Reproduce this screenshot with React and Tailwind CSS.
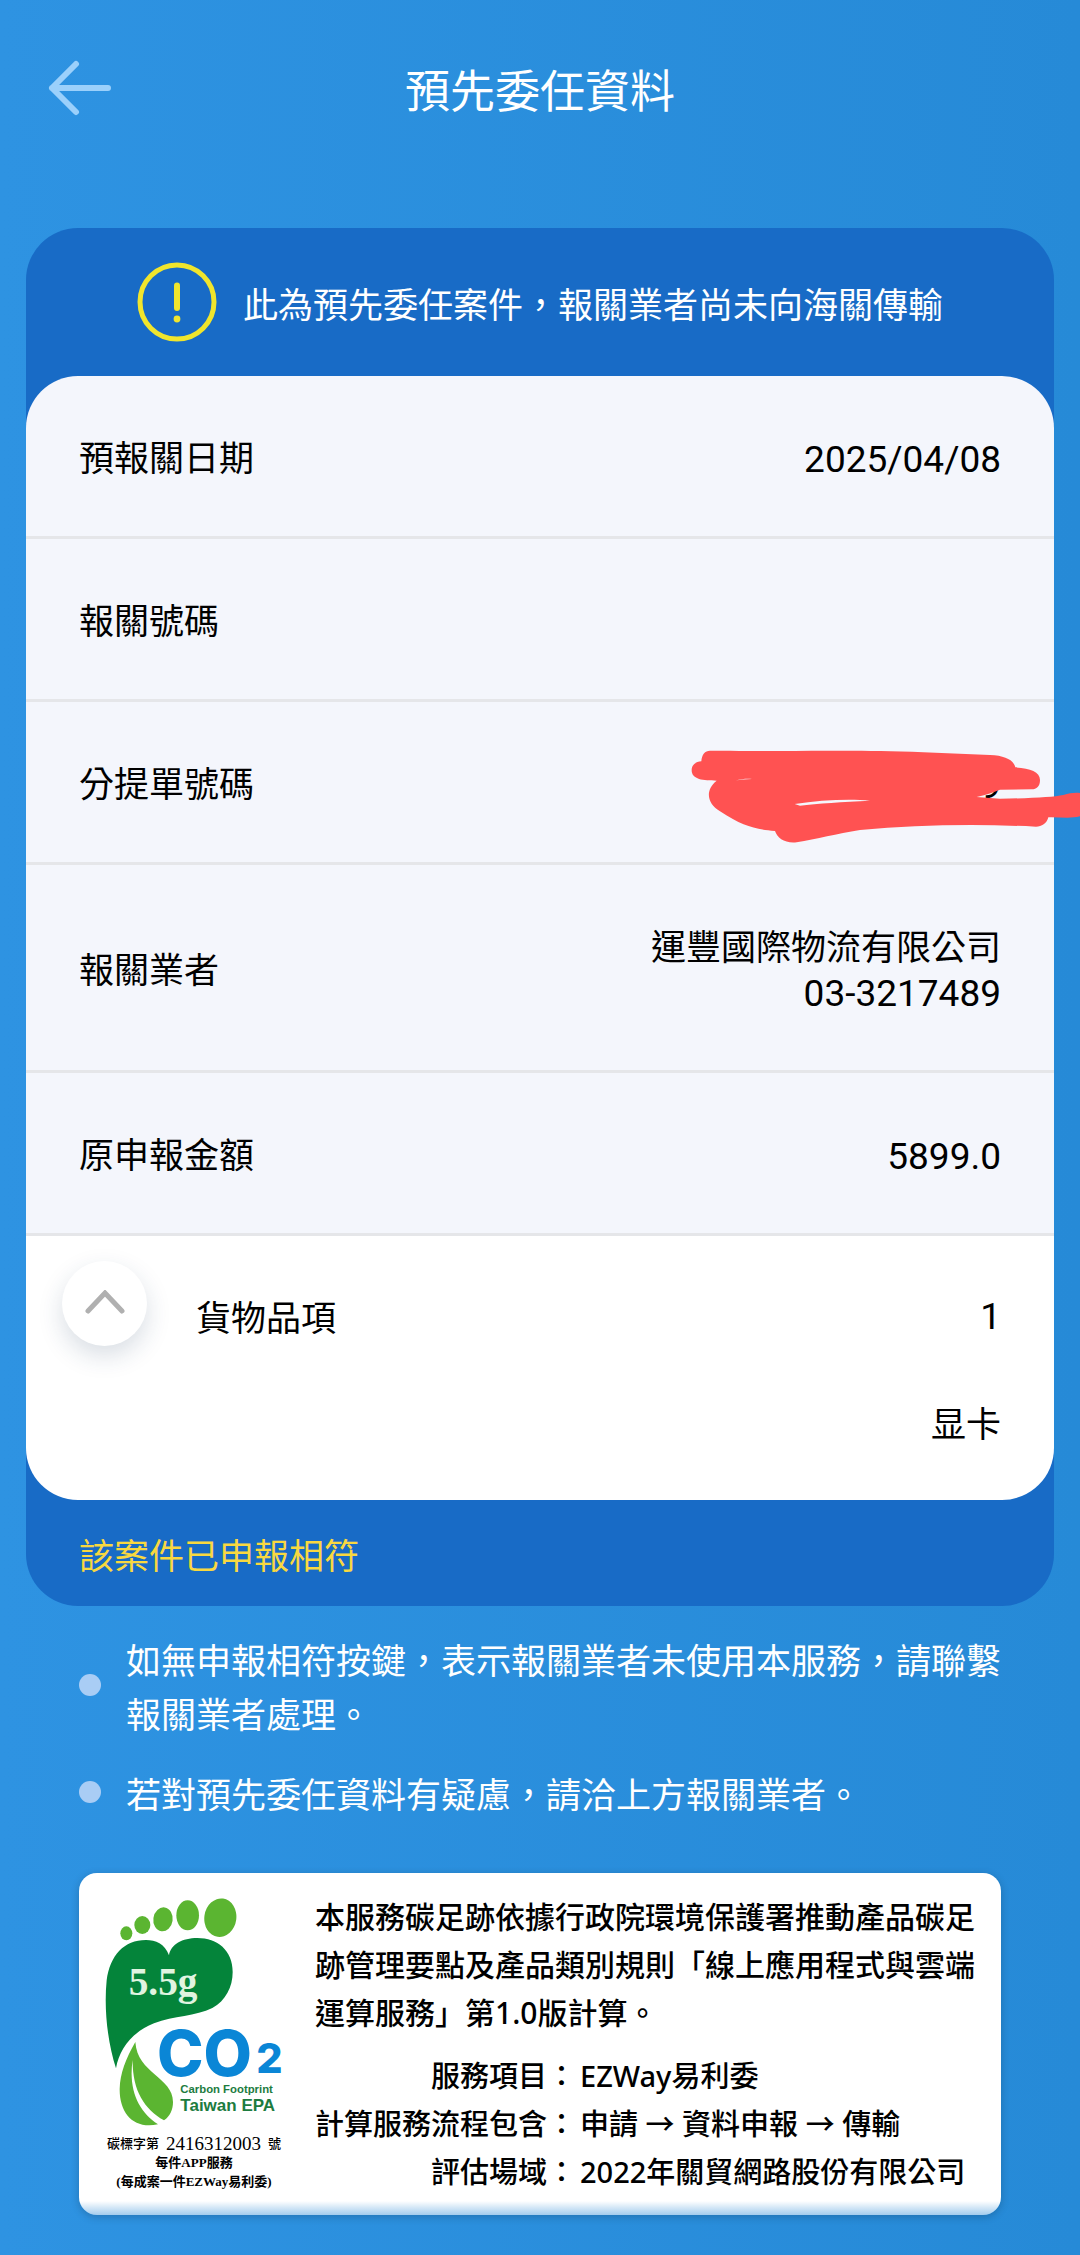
import { useState } from 'react'

function BackArrow() {
  return (
    <svg className="w-16 h-14" viewBox="0 0 64 56" fill="none" stroke="#9bd0fb" strokeWidth="6" strokeLinecap="round" strokeLinejoin="round">
      <path d="M60 28H4M28 4L4 28l24 24" />
    </svg>
  )
}

function AlertIcon() {
  return (
    <svg className="w-20 h-20 shrink-0" viewBox="0 0 80 80" fill="none" stroke="#f0e52d">
      <circle cx="40" cy="40" r="37" strokeWidth="5" />
      <path d="M40 23.500V46" strokeWidth="6" strokeLinecap="round" />
      <circle cx="40" cy="57" r="3.400" fill="#f0e52d" stroke="none" />
    </svg>
  )
}

function Scribble() {
  return (
    <svg className="absolute top-[46px] -right-[26px] w-[390px] h-[97px]" viewBox="150 145 1170 291" aria-hidden="true">
      <path
        fill="#ff5252"
        fillRule="evenodd"
        d="M210 153H270C500 157 620 149 850 158L1050 166C1095 168 1120 180 1126 203C1170 206 1200 215 1200 241C1200 260 1190 269 1175 269L1080 270C1060 278 1035 286 1010 292L1080 297C1180 296 1240 292 1270 286C1290 280 1305 278 1320 280V350C1290 358 1260 352 1225 353C1220 372 1205 381 1188 381C1000 372 830 376 660 391C590 402 530 418 470 428C435 432 412 415 405 394C340 388 310 380 240 335C200 312 195 270 230 243C190 243 155 240 155 212C155 195 168 186 184 185C185 165 195 153 210 153Z
           M464 313C540 301 630 297 690 303C610 306 530 312 480 318Z
           M288 242C304 238 322 236 336 238C318 238 300 241 288 242Z"
      />
    </svg>
  )
}

function FootprintLogo() {
  return (
    <svg className="w-[180px] h-[230px]" viewBox="100 110 540 690" role="img" aria-label="CO2 Carbon Footprint">
      <g fill="#5bb531">
        <ellipse cx="167" cy="219" rx="18" ry="21" />
        <ellipse cx="215" cy="194" rx="24" ry="27" />
        <ellipse cx="277" cy="177" rx="29" ry="36" transform="rotate(8 277 177)" />
        <ellipse cx="351" cy="165" rx="34" ry="45" />
        <ellipse cx="449" cy="172" rx="48" ry="58" transform="rotate(8 449 172)" />
        <path d="M194 545C200 640 307 650 307 725C307 748 298 768 280 780C220 745 185 690 186 598C172 690 205 755 262 792C190 808 146 760 147 685C148 640 165 595 194 545Z" />
      </g>
      <path
        fill="#04843a"
        d="M295 285C282 250 255 239 226 239C160 239 118 285 108 360C99 450 112 550 136 624C146 565 185 515 250 489C310 466 375 468 425 443C465 421 486 380 486 335C486 270 440 233 380 233C335 233 300 252 295 285Z"
      />
      <text x="174" y="404" fontSize="118" fontWeight="700" fill="#e0f4e0" className="font-['Liberation_Serif']">5.5g</text>
      <g fill="#0a86d6" fontWeight="800" className="font-[Inter]">
        <text x="259" y="646" fontSize="188">CO</text>
        <text x="557" y="639" fontSize="124">2</text>
      </g>
      <g fill="#1d7c3f" className="font-['Liberation_Sans']">
        <text x="329" y="698" fontSize="34" fontWeight="700">Carbon Footprint</text>
        <text x="329" y="753" fontSize="51" fontWeight="700">Taiwan EPA</text>
      </g>
    </svg>
  )
}

function Row({ label, children }) {
  return (
    <div className="relative flex items-center justify-between px-[53px] pt-[61px] pb-[54px] border-b-3 border-[#e5e6e9] bg-[#f4f6fc] first:rounded-t-[52px]">
      <dt>{label}</dt>
      <dd className="text-right">{children}</dd>
    </div>
  )
}

function Num({ children }) {
  return <span className="block text-[37px]">{children}</span>
}

const notes = [
  '如無申報相符按鍵，表示報關業者未使用本服務，請聯繫報關業者處理。',
  '若對預先委任資料有疑慮，請洽上方報關業者。',
]

const scope = [
  ['服務項目：', 'EZWay易利委'],
  ['計算服務流程包含：', '申請 → 資料申報 → 傳輸'],
  ['評估場域：', '2022年關貿網路股份有限公司'],
]

export default function App() {
  const [open, setOpen] = useState(true)

  return (
    <div lang="zh-Hant" className="min-h-screen bg-linear-to-r from-[#2e93e2] to-[#268ad7] font-[Roboto,'Noto_Sans_CJK_TC',sans-serif] text-[35px] leading-[45px] text-black">
      <header className="grid grid-cols-[64px_1fr_64px] items-center px-12 pt-[51px] pb-[103px]">
        <button type="button" aria-label="返回" className="cursor-pointer">
          <BackArrow />
        </button>
        <h1 className="pt-2.5 text-center text-[45px] leading-[64px] text-white">預先委任資料</h1>
      </header>

      <main className="px-[26px] pb-9">
        <section className="rounded-[52px] bg-[#186bc6]">
          <div className="flex items-center justify-center gap-[26px] py-[34px]">
            <AlertIcon />
            <p className="pt-2 text-white">此為預先委任案件，報關業者尚未向海關傳輸</p>
          </div>

          <dl>
            <Row label="預報關日期"><Num>2025/04/08</Num></Row>
            <Row label="報關號碼" />
            <Row label="分提單號碼">
              <Num>9</Num>
              <Scribble />
            </Row>
            <Row label="報關業者">
              <p>運豐國際物流有限公司</p>
              <Num>03-3217489</Num>
            </Row>
            <Row label="原申報金額"><Num>5899.0</Num></Row>

            {/* 貨物品項 */}
            <div className="flex items-start bg-white rounded-b-[52px] pl-9 pr-[53px] pt-[25px] pb-[52px]">
              <button
                type="button"
                aria-label="收合"
                aria-expanded={open}
                onClick={() => setOpen(!open)}
                className="flex size-[85px] items-center justify-center rounded-full bg-white shadow-[0_10px_24px_#1e3a5f2b] cursor-pointer"
              >
                <svg className={open ? 'w-10 h-7' : 'w-10 h-7 rotate-180'} viewBox="0 0 40 28" fill="none" stroke="#b0b0b0" strokeWidth="5" strokeLinecap="round">
                  <path d="M3 21L20 3l17 18" />
                </svg>
              </button>
              <dt className="pt-9 pl-[49px]">貨物品項</dt>
              <dd className="flex-1 pt-[33px] text-right">
                <Num>1</Num>
                {open && <p className="pt-16">显卡</p>}
              </dd>
            </div>
          </dl>

          <p className="px-[53px] pt-[35px] pb-[26px] text-[#f8d840]">該案件已申報相符</p>
        </section>

        <ul className="px-[53px] pt-[30px] text-white">
          {notes.map((note) => (
            <li key={note} className="flex items-center gap-[25px] pb-[26px] leading-[54px]">
              <span className="mb-2.5 size-[22px] shrink-0 rounded-full bg-[#a9cdf5]" />
              <p>{note}</p>
            </li>
          ))}
        </ul>

        {/* 碳足跡標籤 */}
        <section className="mx-[53px] mt-[23px] flex justify-between rounded-[18px] bg-[linear-gradient(to_bottom,white_calc(100%-14px),#a3cced)] pl-6 pr-[25px] pt-5 pb-[19px] shadow-[0_2px_8px_#00000033]">
          <div className="flex w-[182px] flex-col items-center pt-1 text-center">
            <FootprintLogo />
            <div className="w-[174px] pt-[7px] font-['Liberation_Serif','Noto_Sans_CJK_TC',serif] text-[13px] leading-[19px] font-bold whitespace-nowrap">
              <p className="flex justify-between font-medium">
                <span>碳標字第</span>
                <span className="text-[19px] font-normal">2416312003</span>
                <span>號</span>
              </p>
              <p>每件APP服務</p>
              <p>(每成案一件EZWay易利委)</p>
            </div>
          </div>

          <div className="w-[661px] font-['Noto_Sans','Noto_Sans_CJK_TC',sans-serif] font-medium">
            <p className="text-[30px] leading-[48px]">
              本服務碳足跡依據行政院環境保護署推動產品碳足跡管理要點及產品類別規則「線上應用程式與雲端運算服務」第1.0版計算。
            </p>
            <dl className="grid grid-cols-[auto_1fr] gap-x-1 pt-[15px] text-[29px] leading-[48px]">
              {scope.map(([name, value]) => (
                <div key={name} className="contents">
                  <dt className="text-right">{name}</dt>
                  <dd className="whitespace-nowrap">{value}</dd>
                </div>
              ))}
            </dl>
          </div>
        </section>
      </main>
    </div>
  )
}
